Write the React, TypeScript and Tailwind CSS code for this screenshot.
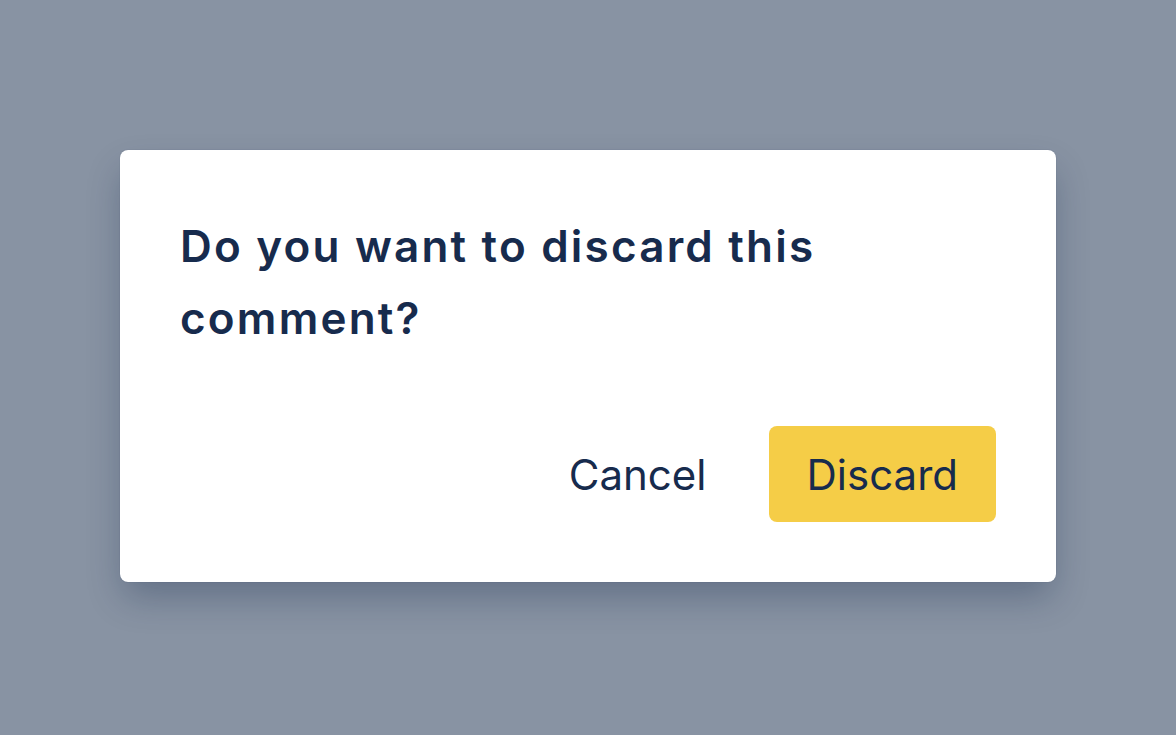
import React from 'react';

export default function App() {
  return (
    <div
      className="w-full h-[735px] bg-[#8893a3] flex items-center justify-center pb-[3px]"
      style={{ fontFamily: 'Inter, "Noto Sans", sans-serif' }}
    >
      <div className="w-[936px] h-[432px] bg-white rounded-[8px] px-[60px] pt-[60px] pb-[60px] flex flex-col justify-between shadow-[0_18px_36px_-4px_rgba(9,30,66,0.3),0_0_1px_rgba(9,30,66,0.31)]">
        <h2 className="text-[44px] leading-[72px] font-semibold text-[#172b4d] tracking-[2.2px] max-w-[720px]">
          Do you want to discard this comment?
        </h2>
        <div className="flex justify-end items-center gap-[24px]">
          <button
            type="button"
            className="h-[96px] px-[38px] rounded-[8px] text-[42px] font-normal text-[#172b4d] bg-transparent"
          >
            Cancel
          </button>
          <button
            type="button"
            className="h-[96px] px-[38px] rounded-[8px] text-[42px] font-normal text-[#172b4d] bg-[#f5cd47]"
          >
            Discard
          </button>
        </div>
      </div>
    </div>
  );
}
